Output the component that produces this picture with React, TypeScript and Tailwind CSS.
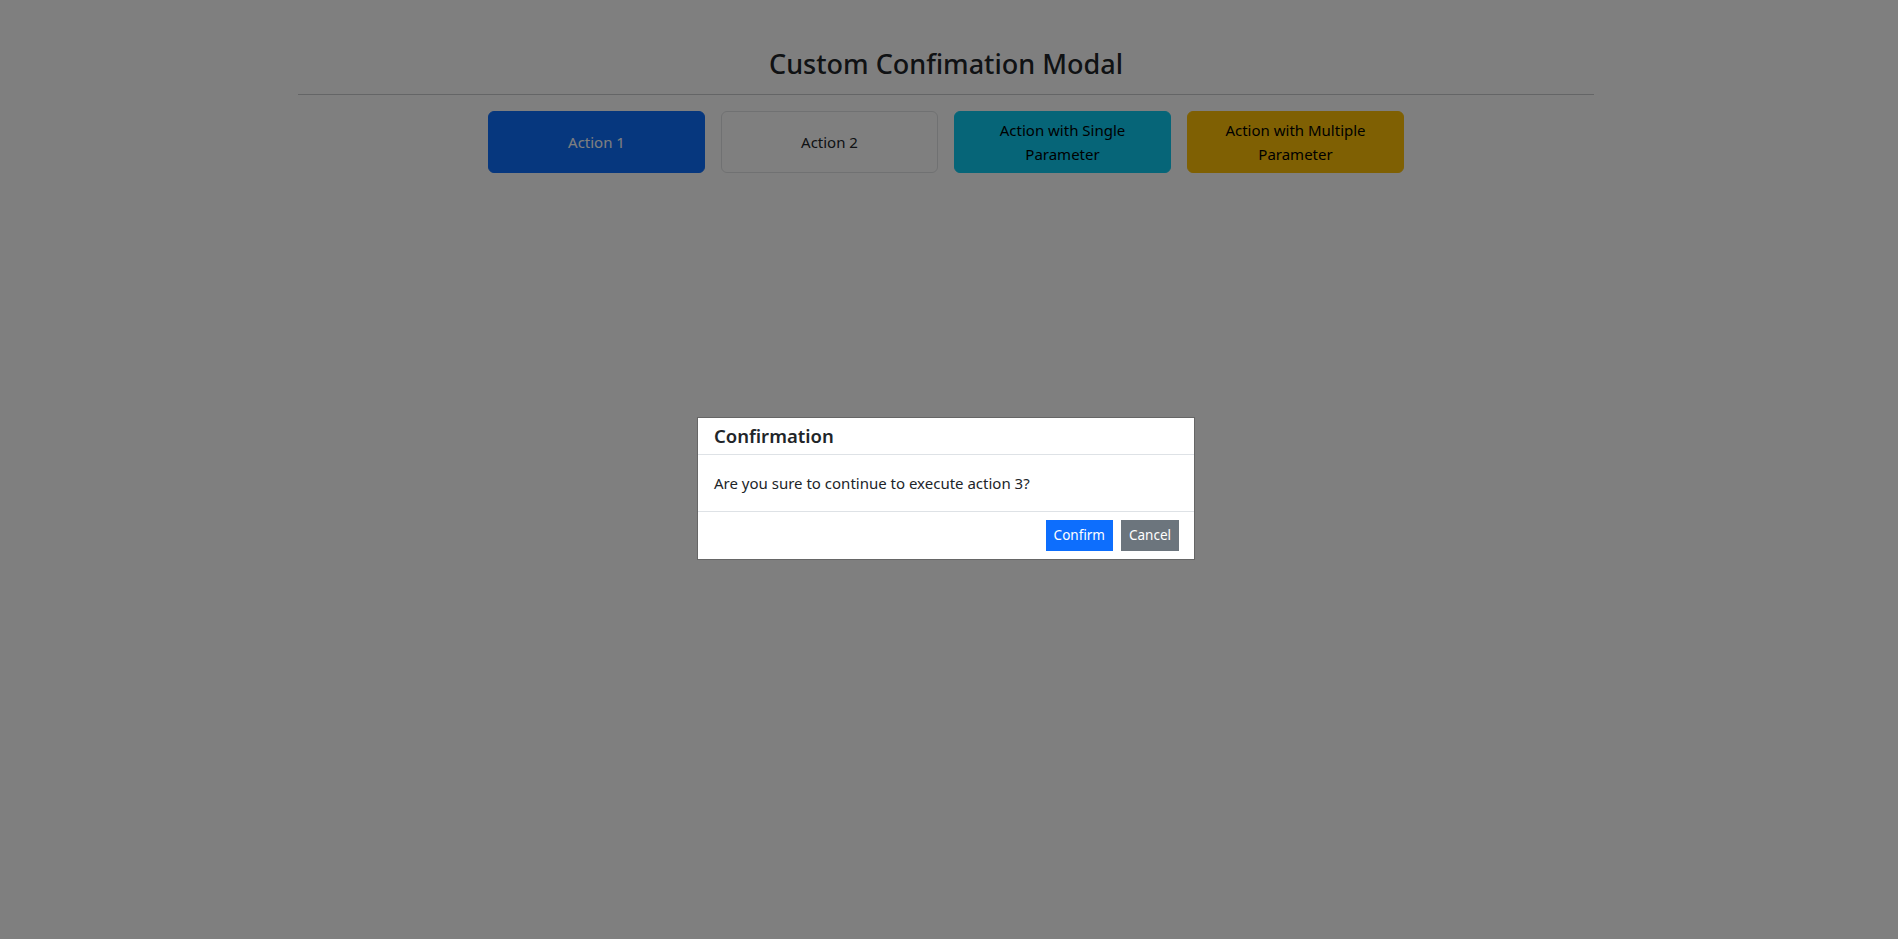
import React from 'react';

const font = { fontFamily: '"Noto Sans", "Open Sans", sans-serif' };

export default function App() {
  return (
    <div className="relative min-h-screen bg-white pr-[6px] text-[#212529]" style={font}>
      <div className="mx-auto w-[1296px] pt-[48px]">
        <h3 className="text-center text-[27px] font-medium leading-[1.2]">Custom Confimation Modal</h3>
        <hr className="mt-[14px] mb-4 border-0 border-t border-[#c8cacc]" />
        <div className="flex justify-center gap-4">
          <button className="h-[62px] w-[217px] rounded-md border border-[#0d6efd] bg-[#0d6efd] px-3 text-[15px] leading-6 text-white">
            Action 1
          </button>
          <button className="h-[62px] w-[217px] rounded-md border border-[#e0e2e4] bg-white px-3 text-[15px] leading-6 text-[#212529]">
            Action 2
          </button>
          <button className="h-[62px] w-[217px] rounded-md border border-[#0dcaf0] bg-[#0dcaf0] px-3 text-[15px] leading-6 text-black">
            Action with Single Parameter
          </button>
          <button className="h-[62px] w-[217px] rounded-md border border-[#ffc107] bg-[#ffc107] px-3 text-[15px] leading-6 text-black">
            Action with Multiple Parameter
          </button>
        </div>
      </div>

      <div className="fixed inset-0 bg-black/50">
        <div className="absolute left-[697px] top-[417px] w-[498px] border border-[#666] bg-white">
          <div className="border-b border-[#dee2e6] px-4 py-[3px]">
            <h5 className="text-[18.5px] font-semibold leading-[30px] text-[#212529]">Confirmation</h5>
          </div>
          <div className="p-4 text-[15px] leading-6 text-[#212529]">Are you sure to continue to execute action 3?</div>
          <div className="flex justify-end gap-2 border-t border-[#dee2e6] px-[15px] py-2">
            <button className="bg-[#0d6efd] px-2 py-1 text-[13.5px] leading-[23px] text-white">Confirm</button>
            <button className="bg-[#6c757d] px-2 py-1 text-[13.5px] leading-[23px] text-white">Cancel</button>
          </div>
        </div>
      </div>
    </div>
  );
}
